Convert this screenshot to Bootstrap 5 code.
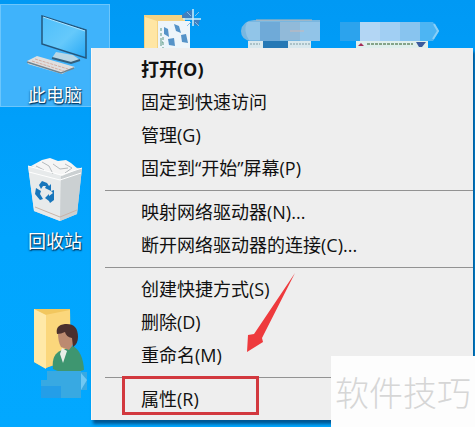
<!DOCTYPE html>
<html lang="zh-CN">
<head>
<meta charset="utf-8">
<meta name="viewport" content="width=device-width, initial-scale=1">
<title>桌面</title>
<link href="https://cdn.jsdelivr.net/npm/bootstrap@5.3.0/dist/css/bootstrap.min.css" rel="stylesheet">
<style>
body { background: linear-gradient(180deg, #0099f4 0, #009ffa 120px, #01a5fe 240px, #02a8ff 100%); font-family: "Open Sans", "Noto Sans CJK SC", sans-serif; color: #000; }
.desk-icon { width: 110px; height: 103px; border: 1px solid transparent; color: #fff; font: 18px/24px "Noto Sans CJK SC", sans-serif; text-shadow: 1px 1px 1px #013a66, 0 1px 2px #013a66; }
.desk-icon svg { flex-shrink: 0; }
.desk-icon.chosen { background: #3fb3fb; border-color: #6cc6fb; }
.icon-column { gap: 43px; width: 110px; }
.top-art { left: 130px; top: 0; }
.ctx-menu { left: 91px; right: 2px; top: 48px; padding: 5px 0 4px; background: #eee; border: 0; border-left: 1px solid #fbf6f2; box-shadow: 2px 4px 3px rgba(0, 45, 90, .65); }
.ctx-item { height: 33px; line-height: 33px; font-size: 18px; padding: 0 16px 0 49px; color: #111; background: none; border: 0; width: 100%; text-align: left; display: block; white-space: nowrap; }
.ctx-item:hover { background: #fff; }
.ctx-line { margin: 5px 0 5px 13px; border-top: 1px solid #929292; opacity: 1; }
.frame-red { left: 30px; top: -7px; width: 137px; height: 39px; border: 3px solid #d2383e; pointer-events: none; }
.arrow-red { left: 240px; top: 270px; pointer-events: none; }
.site-stamp { right: 0; bottom: 0; width: 144px; height: 71px; background: #fdfdfd; color: #d6d6d6; font: 300 34px/71px "Noto Sans CJK SC", sans-serif; }
</style>
</head>
<body class="min-vh-100 position-relative overflow-hidden">
<main class="min-vh-100" aria-label="桌面">
  <div class="icon-column d-flex flex-column">
    <div class="desk-icon chosen d-flex flex-column align-items-center justify-content-end mt-1">
      <svg width="110" height="76" viewBox="0 6 110 76" aria-hidden="true">
        <defs><linearGradient id="scr" x2="1" y2="1"><stop stop-color="#4dbefb"/><stop offset=".55" stop-color="#65c9fb"/><stop offset="1" stop-color="#25a7f5"/></linearGradient></defs>
        <path d="M42 16 86 30 86 58 42 44Z" fill="url(#scr)" stroke="#23577e" stroke-width="1.5"/>
        <path d="M43 17 85 31" stroke="#a8e2ff" fill="none"/>
        <path d="M56 52 73 55 80 60 71 63 52 58Z" fill="#b8d6e5"/>
        <path d="M52 58 71 63 80 60" stroke="#34607d" stroke-width="2" fill="none"/>
        <path d="M27 61 37 56 75 67 62 74 28 64Z" fill="#dfdfdf"/>
        <path d="M27 62 61 73 74 68" stroke="#6e8491" stroke-width="1.5" fill="none"/>
        <path d="M35 59 68 69M32 61 64 71" stroke="#d5aea2" stroke-dasharray="3 1" fill="none"/>
      </svg>
      <span>此电脑</span>
    </div>
    <div class="desk-icon d-flex flex-column align-items-center justify-content-end">
      <svg width="110" height="77" viewBox="0 151 110 77" aria-hidden="true">
        <path d="M28 166 82 168 77 214 60 221 34 211Z" fill="#d8dcdd"/>
        <path d="M28 166 61 175 60 221 34 211Z" fill="#e7eaeb"/>
        <path d="M61 175 82 168 77 214 60 221Z" fill="#cbd0d2"/>
        <path d="M31 166 42 160 50 158 58 161 66 160 71 163 78 169 62 176Z" fill="#f5f5f5"/>
        <path d="M42 162 49 166 53 174M53 164 60 169 68 168M65 164 72 168 65 173M36 166 44 170" stroke="#b5babd" fill="none"/>
        <path d="M28 166 61 175 82 168M29 172 60 180 81 173" stroke="#fff" fill="none"/>
        <path d="M35 207 60 217 77 210" stroke="#c9b4a8" fill="none"/>
        <path d="M39 185 42 181 47 183 49 186 51 184 51 191 45 188 46 186 43 186 41 189ZM36 188 41 191 40 194 43 199 40 200 35 194ZM45 198 49 194 49 196 53 193 51 191 54 190 54 200 50 203 49 201Z" fill="#1876bb"/>
      </svg>
      <span>回收站</span>
    </div>
    <div class="desk-icon d-flex align-items-end">
      <svg width="110" height="97" viewBox="0 301 110 97" role="img" aria-label="用户文件夹">
        <path d="M33 309 69 309 70 360 44 368 33 362Z" fill="#f2c75e"/>
        <path d="M44 315 69 310 69 358 45 368Z" fill="#fbd77c"/>
        <path d="M33 309 45 315 45 369 33 362Z" fill="#ffe9a8"/>
        <path d="M52 369Q50 354 61 350L72 346Q82 352 83 370Q67 376 52 369Z" fill="#3e9670"/>
        <path d="M59 354 62 363 66 351 61 348Z" fill="#e9eee9"/>
        <path d="M57 333Q58 326 68 327Q76 330 74 342L68 350 60 347Q57 342 57 333Z" fill="#bc8a70"/>
        <path d="M56 334Q54 325 64 324Q77 323 77 337Q77 344 72 347L71 338Q65 337 64 332Q60 334 56 334Z" fill="#4b302e"/>
        <path d="M46 371H80V372H86V390H80V398H40V380H46Z" fill="#38a9e2"/>
        <path d="M40 386H60V398H40Z" fill="#249ee8"/><path d="M80 373 86 380 80 390Z" fill="#70c8f3"/>
      </svg>
    </div>
  </div>

  <svg class="top-art position-absolute" width="320" height="50" viewBox="130 0 320 50" aria-hidden="true">
    <path d="M144 15H185V48H144Z" fill="#f4d283"/><path d="M145 17 157 21V48H145Z" fill="#ffe6a4"/>
    <path d="M158 21H190V48H158Z" fill="#edf5fa"/>
    <path d="M164 27 168 29 169 37 164 34ZM174 24 179 26 181 33 176 31ZM181 35 186 34 188 43 182 42ZM168 39 174 38 175 46 169 45Z" fill="#5593c8"/>
    <path d="M161 28V48M163 37V48M160 42H165" stroke="#5c9984" stroke-dasharray="3 2"/>
    <path d="M182 15 187 11 192 10V18H182ZM194 20H200L198 26 194 24Z" fill="#3f7fc0"/>
    <path d="M193 9V26M183 19H201" stroke="#d3ebf5" stroke-width="1.5"/>
    <path d="M187 12 191 16M199 12 195 16M199 26 195 22M187 26 191 22" stroke="#8cbfe2"/>
    <path d="M254 20H320V41H250Q241 39 241 31Q242 21 254 20Z" fill="#79b7e0"/>
    <path d="M247 22H260V40H249Q243 31 247 22Z" fill="#91c5e8"/><path d="M260 22H280V42H260Z" fill="#6faad8"/><path d="M280 22H300V40H280Z" fill="#91bad9"/><path d="M300 22H320V41H300Z" fill="#91c4e8"/>
    <path d="M256 20H312" stroke="#c3b8b1"/><path d="M290 31H304" stroke="#c9b7b7"/>
    <path d="M248 41H311V48H248Z" fill="#d9e8ed"/><path d="M263 41H288V48H263Z" fill="#2578b5"/><path d="M290 44H310M250 44H260" stroke="#7e9ca3" stroke-dasharray="2 1"/>
    <path d="M340 22H360V41H340Z" fill="#2ca3ed"/><path d="M360 22H380V41H360Z" fill="#b3d6f4"/><path d="M380 22H400V41H380Z" fill="#a1cff3"/><path d="M400 22H420V41H400Z" fill="#88c4ef"/>
    <path d="M420 22H433L439 31 433 41H420Z" fill="#4db5f3"/><path d="M434 24 438 31 433 39" stroke="#8acff6" stroke-width="2" fill="none"/>
    <path d="M356 41H428V48H356Z" fill="#e0efec"/><path d="M367 44H413" stroke="#85a489" stroke-width="2" stroke-dasharray="3 1"/><path d="M358 46 361 43 364 46Z" fill="#a52d57"/><path d="M416 42H426L422 47H419Z" fill="#3b5b9d"/>
  </svg>

  <nav class="ctx-menu position-absolute" aria-label="右键菜单">
    <button type="button" class="ctx-item fw-bold">打开(O)</button>
    <button type="button" class="ctx-item">固定到快速访问</button>
    <button type="button" class="ctx-item">管理(G)</button>
    <button type="button" class="ctx-item">固定到“开始”屏幕(P)</button>
    <hr class="ctx-line">
    <button type="button" class="ctx-item">映射网络驱动器(N)...</button>
    <button type="button" class="ctx-item">断开网络驱动器的连接(C)...</button>
    <hr class="ctx-line">
    <button type="button" class="ctx-item">创建快捷方式(S)</button>
    <button type="button" class="ctx-item">删除(D)</button>
    <button type="button" class="ctx-item">重命名(M)</button>
    <hr class="ctx-line">
    <div class="position-relative">
      <button type="button" class="ctx-item">属性(R)</button>
      <div class="frame-red position-absolute"></div>
    </div>
  </nav>

  <svg class="arrow-red position-absolute" width="60" height="86" viewBox="240 270 60 86" aria-hidden="true">
    <path d="M295 273 262 338 263 342 247 352 248 335 254 334Z" fill="#ee3a3d"/>
  </svg>
  <div class="site-stamp position-absolute text-center text-nowrap">软件技巧</div>
</main>
<script src="https://cdn.jsdelivr.net/npm/bootstrap@5.3.0/dist/js/bootstrap.bundle.min.js"></script>
</body>
</html>
